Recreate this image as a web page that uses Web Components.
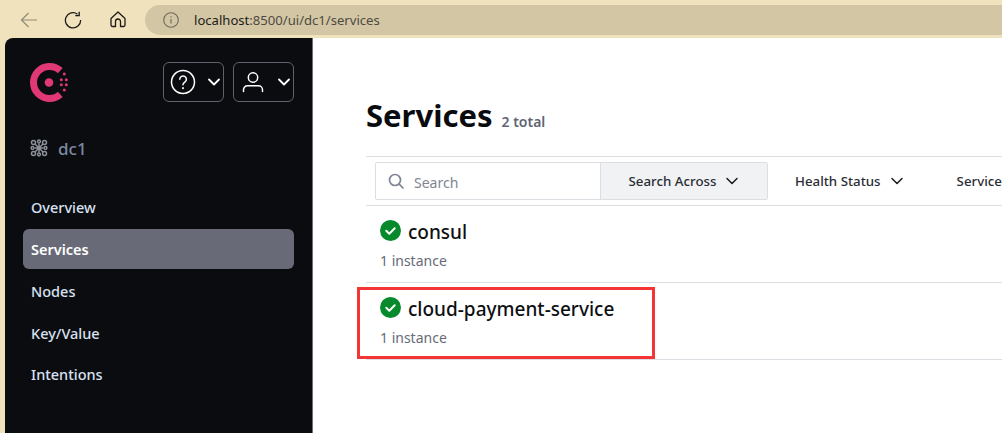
<!DOCTYPE html>
<html><head><meta charset="utf-8"><style>
html,body{margin:0;height:100%;overflow:hidden;background:#fff}
body{font-family:"Noto Sans","Open Sans",sans-serif;width:1002px;height:433px;display:flex;flex-direction:column}
</style></head><body>
<browser-bar></browser-bar>
<div style="display:flex;flex:1;min-height:0;background:#f0e2bd">
<side-nav></side-nav>
<services-page></services-page>
</div>
<script>
function def(name,html){customElements.define(name,class extends HTMLElement{constructor(){super();this.attachShadow({mode:'open'}).innerHTML=html}})}
const chev=(s,c,w)=>`<svg width="${s}" height="${s}" viewBox="0 0 14 14" fill="none" stroke="${c}" stroke-width="${w}" stroke-linecap="round" stroke-linejoin="round"><path d="M2 4.5l5 5 5-5"/></svg>`;
def('browser-bar',`<style>
:host{display:flex;align-items:center;height:38px;background:#f0e2bd;box-sizing:border-box;padding:0 0 0 20px;flex:none}
.i{display:flex;flex:none}
.pill{flex:1;height:30px;margin-left:19px;margin-top:1px;background:#d3c6a5;border-radius:15px 0 0 15px;display:flex;align-items:center;padding-left:18px;font:13.100px "Noto Sans",sans-serif;color:#4d4a40}
.pill b{font-weight:400;color:#1c1b18;margin-left:15px}
</style>
<svg class="i" width="18" height="18" viewBox="0 0 18 18" fill="none" stroke="#908a78" stroke-width="1.2" style="margin-top:1px"><path d="M17 9H1.5M8.5 2L1.5 9l7 7"/></svg>
<svg class="i" width="18" height="18" viewBox="0 0 18 18" fill="none" stroke="#1c1b18" stroke-width="1.3" style="margin-left:26px;margin-top:1px"><path d="M13.5 3.2A7.6 7.6 0 1 0 16.6 9"/><path d="M15.2 .8v3.9h-3.9"/></svg>
<svg class="i" width="16" height="17" viewBox="0 0 16 17" fill="none" stroke="#1c1b18" stroke-width="1.3" stroke-linejoin="round" style="margin-left:28px;margin-top:1px"><path d="M8 1L1 7.5V14a1.5 1.5 0 0 0 1.5 1.5H5.5V10.500a2.500 2.500 0 0 1 5 0V15.500h3A1.500 1.500 0 0 0 15 14V7.500z"/></svg>
<div class="pill"><svg width="16" height="16" viewBox="0 0 16 16" fill="none" stroke="#6f6a5a" stroke-width="1.100"><circle cx="8" cy="8" r="7.300"/><path d="M8 7v4.500M8 4.200v1.300"/></svg><b>localhost<span style="color:#4d4a40">:8500/ui/dc1/services</span></b></div>`);
def('icon-btn',`<style>
:host{display:flex;align-items:center;box-sizing:border-box;width:61px;height:40px;border:1px solid #5f626c;border-radius:6px;padding:0 2px 0 6px;justify-content:space-between}
::slotted(svg){display:block}
</style><slot></slot>`);
def('nav-item',`<style>
:host{display:flex;align-items:center;box-sizing:border-box;height:40px;padding-left:8px;border-radius:6px;font:500 14.500px "Noto Sans",sans-serif;color:#d8e2f2}
:host([active]){background:#686b77;color:#fff;font-weight:600}
</style><slot></slot>`);
def('side-nav',`<style>
:host{display:block;box-sizing:border-box;width:308px;margin-left:5px;background:#0b0c0f;border-top-left-radius:8px;border-right:1px solid #6b6e78;flex:none;padding:24px 18px 0 18px}
.top{display:flex;align-items:center;height:40px}
.logo{margin-left:6px;margin-right:auto}
.btns{display:flex;gap:9px}
.dc{display:flex;align-items:center;gap:10px;margin:34px 0 0 7px;height:24px;font:500 17px "Noto Sans",sans-serif;color:#7c8aa0}
nav{display:flex;flex-direction:column;margin-top:27px;gap:2px}
nav-item:last-child{margin-top:-1px}
</style>
<div class="top">
<svg class="logo" width="40" height="41" viewBox="0 0 40 41"><path d="M31.300 8.700A16 16 0 1 0 31.300 32.300" fill="none" stroke="#e03875" stroke-width="7"/><circle cx="20" cy="20.500" r="4.300" fill="#e03875"/><g fill="#e03875"><circle cx="35.300" cy="12" r="1.500"/><circle cx="32.300" cy="17.700" r="1.500"/><circle cx="37.300" cy="17.700" r="1.500"/><circle cx="32.300" cy="22.700" r="1.500"/><circle cx="37.300" cy="22.700" r="1.500"/><circle cx="35.300" cy="28" r="1.500"/></g></svg>
<div class="btns">
<icon-btn><svg width="26" height="26" viewBox="0 0 26 26" fill="none" stroke="#fff" stroke-width="1.500" stroke-linecap="round"><circle cx="13" cy="13" r="11.500"/><path d="M9.800 10.300a3.300 3.300 0 1 1 5 2.800c-1.100.7-1.800 1.300-1.800 2.700"/><path d="M13 19v.3" stroke-width="1.900"/></svg>${chev(14,'#fff',1.8)}</icon-btn>
<icon-btn style="padding-left:8px"><svg width="22" height="22" viewBox="0 0 22 22" fill="none" stroke="#fff" stroke-width="1.500" stroke-linecap="round"><circle cx="11" cy="6.500" r="4.700"/><path d="M1.500 20.500v-1.700a4 4 0 0 1 4-4h11a4 4 0 0 1 4 4v1.700"/></svg>${chev(14,'#fff',1.8)}</icon-btn>
</div></div>
<div class="dc"><svg width="18" height="18" viewBox="0 0 18 18" fill="none" stroke="#8c909a" stroke-width="1.500"><path d="M5 5l8 8M13 5l-8 8M9 4.500v9M4.500 9h9"/><circle cx="3.500" cy="3.500" r="2"/><circle cx="14.500" cy="3.500" r="2"/><circle cx="3.500" cy="14.500" r="2"/><circle cx="14.500" cy="14.500" r="2"/><circle cx="9" cy="2.500" r="1.400"/><circle cx="9" cy="15.500" r="1.400"/><circle cx="2.500" cy="9" r="1.400"/><circle cx="15.500" cy="9" r="1.400"/></svg>dc1</div>
<nav><nav-item>Overview</nav-item><nav-item active>Services</nav-item><nav-item>Nodes</nav-item><nav-item>Key/Value</nav-item><nav-item>Intentions</nav-item></nav>`);
def('filter-item',`<style>
:host{display:flex;align-items:center;gap:9px;font:500 13.300px "Noto Sans",sans-serif;color:#2a2d35;white-space:nowrap;flex:none}
</style><slot></slot>${chev(14,'#1f2128',1.6)}`);
def('service-row',`<style>
:host{display:block;box-sizing:border-box;height:77px;border-bottom:1px solid #dcdee3;padding:11px 0 0 14px}
.t{display:flex;align-items:center;gap:7px;height:30px;font:500 19px "Noto Sans",sans-serif;color:#0e0f13}
.s{margin-top:4px;font:400 14px/20px "Noto Sans",sans-serif;color:#676b77}
svg{margin-top:-4px;flex:none}
</style><div class="t"><svg width="21" height="21" viewBox="0 0 21 21"><circle cx="10.500" cy="10.500" r="10.500" fill="#078a2c"/><path d="M6.300 10.800l3 2.900 5.400-5.400" fill="none" stroke="#fff" stroke-width="2" stroke-linecap="round" stroke-linejoin="round"/></svg><slot></slot></div><div class="s">1 instance</div>`);
def('services-page',`<style>
:host{display:block;position:relative;flex:1;min-width:0;background:#fff;padding-left:53px;overflow:hidden}
h1{margin:0;display:flex;align-items:baseline;gap:9px;height:118px;box-sizing:border-box;padding-top:52px;font:700 31px/50px "Noto Sans",sans-serif;color:#0a0b0f}
h1 small{font:600 14px "Noto Sans",sans-serif;color:#5f6575}
.bar{display:flex;align-items:flex-start;height:50px;box-sizing:border-box;padding-top:5px;border-top:1px solid #dcdee3;border-bottom:1px solid #dcdee3;width:700px}
.search{display:flex;margin-left:9px;box-sizing:border-box;width:393px;height:38px;border:1px solid #dcdee3;border-radius:2px;flex:none}
.inp{display:flex;align-items:center;gap:10px;width:225px;box-sizing:border-box;padding:2px 0 0 12px;font:400 14px "Noto Sans",sans-serif;color:#7f8492;border-right:1px solid #dcdee3}
.inp svg{margin-top:-3px}
.across{flex:1;background:#f1f2f4;display:flex;align-items:center;justify-content:center}
.mark{position:absolute;left:44px;top:249px;width:298px;height:72px;box-sizing:border-box;border:3px solid #f43535}
.f{margin-top:10px}
</style>
<h1>Services <small>2 total</small></h1>
<div class="bar"><div class="search"><div class="inp"><svg width="16" height="16" viewBox="0 0 16 16" fill="none" stroke="#7f8492" stroke-width="1.700" stroke-linecap="round"><circle cx="7" cy="7" r="5.500"/><path d="M11.200 11.200l3.800 3.800"/></svg>Search</div><div class="across"><filter-item>Search Across</filter-item></div></div>
<filter-item class="f" style="margin-left:27px">Health Status</filter-item><filter-item class="f" style="margin-left:53px">Service Type</filter-item></div>
<service-row>consul</service-row><service-row>cloud-payment-service</service-row>
<div class="mark"></div>`);
</script>
</body></html>
